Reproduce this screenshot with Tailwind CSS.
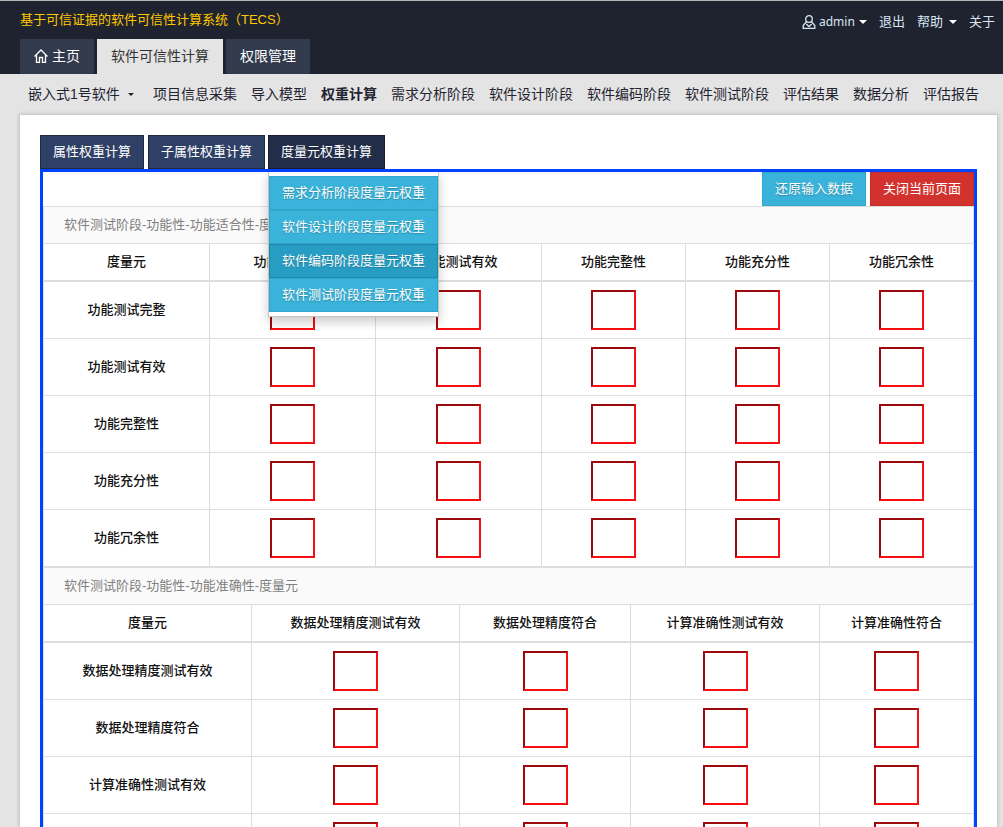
<!DOCTYPE html>
<html lang="zh-CN">
<head>
<meta charset="utf-8">
<title>TECS</title>
<script src="https://cdn.jsdelivr.net/npm/@tailwindcss/browser@4"></script>
</head>
<body class="h-[827px] w-[1003px] overflow-hidden bg-[#e4e4e4] font-['Liberation_Sans','Noto_Sans_CJK_SC',sans-serif] text-[13px]">
<header class="flex h-[74px] flex-col border-t border-[#b5b5b5] bg-[#1f2330]">
  <div class="flex h-[38px] justify-between">
    <div class="pt-[9px] pl-5 leading-5 whitespace-nowrap text-[#ffc800]">基于可信证据的软件可信性计算系统（TECS）</div>
    <div class="flex h-5 w-[201px] shrink-0 items-center pt-[21px] whitespace-nowrap text-[#d9e6f2]">
      <svg class="mr-[3px] size-[14px]" viewBox="0 0 14 14" fill="none" stroke="currentColor" stroke-width="1.3"><circle cx="7" cy="4" r="3.300"/><path d="M4.600 6.500 1.200 10.500v2.800h11.600v-2.800L9.400 6.500M4.300 9 7 11.500 9.700 9"/></svg>
      <span class="w-[36px] font-['Noto_Sans'] text-[12px]">admin</span>
      <span class="ml-[4px] border-x-4 border-t-4 border-x-transparent border-t-white"></span>
      <span class="ml-[12px]">退出</span>
      <span class="ml-[12px]">帮助</span>
      <span class="ml-[6px] border-x-4 border-t-4 border-x-transparent border-t-white"></span>
      <span class="ml-[12px]">关于</span>
    </div>
  </div>
  <nav class="flex h-[35px] gap-[3px] pl-5 text-sm leading-[34px] text-white">
    <div class="flex w-[74px] bg-[#323a4d] pl-[14px]">
      <svg class="mt-[10px] mr-1 size-[14px]" viewBox="0 0 14 14" fill="none" stroke="currentColor" stroke-width="1.3"><path d="M.5 7.500 7 1l6.500 6.500M2.500 6v7.300h3V8.500h3v4.800h3V6"/></svg>主页</div>
    <div class="w-[126px] bg-[#e4e4e4] text-center text-[#333]">软件可信性计算</div>
    <div class="w-[84px] bg-[#323a4d] text-center">权限管理</div>
  </nav>
</header>
<nav class="flex h-10 gap-[14px] pl-7 text-sm leading-10 whitespace-nowrap text-[#1f2330]">
  <div class="flex w-[111px] items-center">嵌入式1号软件<span class="ml-2 border-x-[3px] border-t-[3px] border-x-transparent border-t-[#1f2330]"></span></div>
  <span>项目信息采集</span><span>导入模型</span><span class="font-bold">权重计算</span><span>需求分析阶段</span><span>软件设计阶段</span><span>软件编码阶段</span><span>软件测试阶段</span><span>评估结果</span><span>数据分析</span><span>评估报告</span>
</nav>
<main class="ml-[19px] h-[713px] w-[979px] overflow-hidden border border-b-0 border-[#ccc] bg-white px-5 pt-5 shadow-[0_0_4px_rgba(0,0,0,0.15)]">
  <div class="flex h-[34px] text-center leading-[31px] text-white">
    <div class="mr-1 w-[104px] border border-[#1f2940] bg-[#2f4066]">属性权重计算</div>
    <div class="mr-[3px] w-[117px] border border-[#1f2940] bg-[#2f4066]">子属性权重计算</div>
    <div class="relative w-[117px] border border-[#171e30] bg-[#222e49]">度量元权重计算
      <div class="absolute top-[36px] left-[-1px] z-10 w-[171px] border border-t-0 border-[#c4c4c4] bg-white pt-1 pb-1 text-white shadow-[0_5px_10px_rgba(0,0,0,0.2)] [text-shadow:0_1px_1px_rgba(0,0,0,0.25)]">
        <div class="h-[34px] border border-[#2fa6cc] bg-[#39b3d9]">需求分析阶段度量元权重</div>
        <div class="h-[34px] border border-[#2fa6cc] bg-[#39b3d9]">软件设计阶段度量元权重</div>
        <div class="h-[34px] border border-[#2085a6] bg-[#279dc3]">软件编码阶段度量元权重</div>
        <div class="h-[34px] border border-[#2fa6cc] bg-[#39b3d9]">软件测试阶段度量元权重</div>
      </div>
    </div>
  </div>
  <section class="h-[700px] w-[937px] border-[3px] border-[#0043ff]">
    <div class="flex h-[34px] justify-end gap-1 text-center leading-[31px] text-white">
      <div class="w-[104px] border border-[#2fa6cc] bg-[#39b3d9] [text-shadow:0_1px_1px_rgba(0,0,0,0.25)]">还原输入数据</div>
      <div class="w-[104px] border border-[#c52b27] bg-[#d2322d]">关闭当前页面</div>
    </div>
    <div id="tables" class="border-l border-[#ddd]"></div>
  </section>
</main>
<script>
const tables = [
  {title:'软件测试阶段-功能性-功能适合性-度量元', grid:'grid grid-cols-[166px_166px_166px_144px_144px_144px]', names:['功能测试完整','功能测试有效','功能完整性','功能充分性','功能冗余性']},
  {title:'软件测试阶段-功能性-功能准确性-度量元', grid:'grid grid-cols-[208px_208px_171px_189px_154px]', names:['数据处理精度测试有效','数据处理精度符合','计算准确性测试有效','计算准确性符合']}
];
document.getElementById('tables').innerHTML = tables.map(t =>
  `<div class="h-[37px] border-t border-r border-[#ddd] bg-[#fafafa] pl-5 leading-[35px] text-[#808080]">${t.title}</div>
  <div class="${t.grid} h-[37px] border-t border-[#ddd] text-center font-medium leading-[35px] text-[#111]">${['度量元',...t.names].map(n=>`<div class="border-r border-[#ddd]">${n}</div>`).join('')}</div>
  <div class="border-t border-b border-[#ddd]">${t.names.map(n=>`<div class="${t.grid} h-[57px] border-t border-[#ddd] text-center font-medium leading-[55px] text-[#111]"><div class="border-r border-[#ddd]">${n}</div>${t.names.map(()=>`<div class="flex items-center justify-center border-r border-[#ddd]"><div class="h-10 w-[45px] border-2 border-t-[#9c0a0d] border-r-[#f70e12] border-b-[#f70e12] border-l-[#9c0a0d]"></div></div>`).join('')}</div>`).join('')}</div>`).join('');
</script>
</body>
</html>
